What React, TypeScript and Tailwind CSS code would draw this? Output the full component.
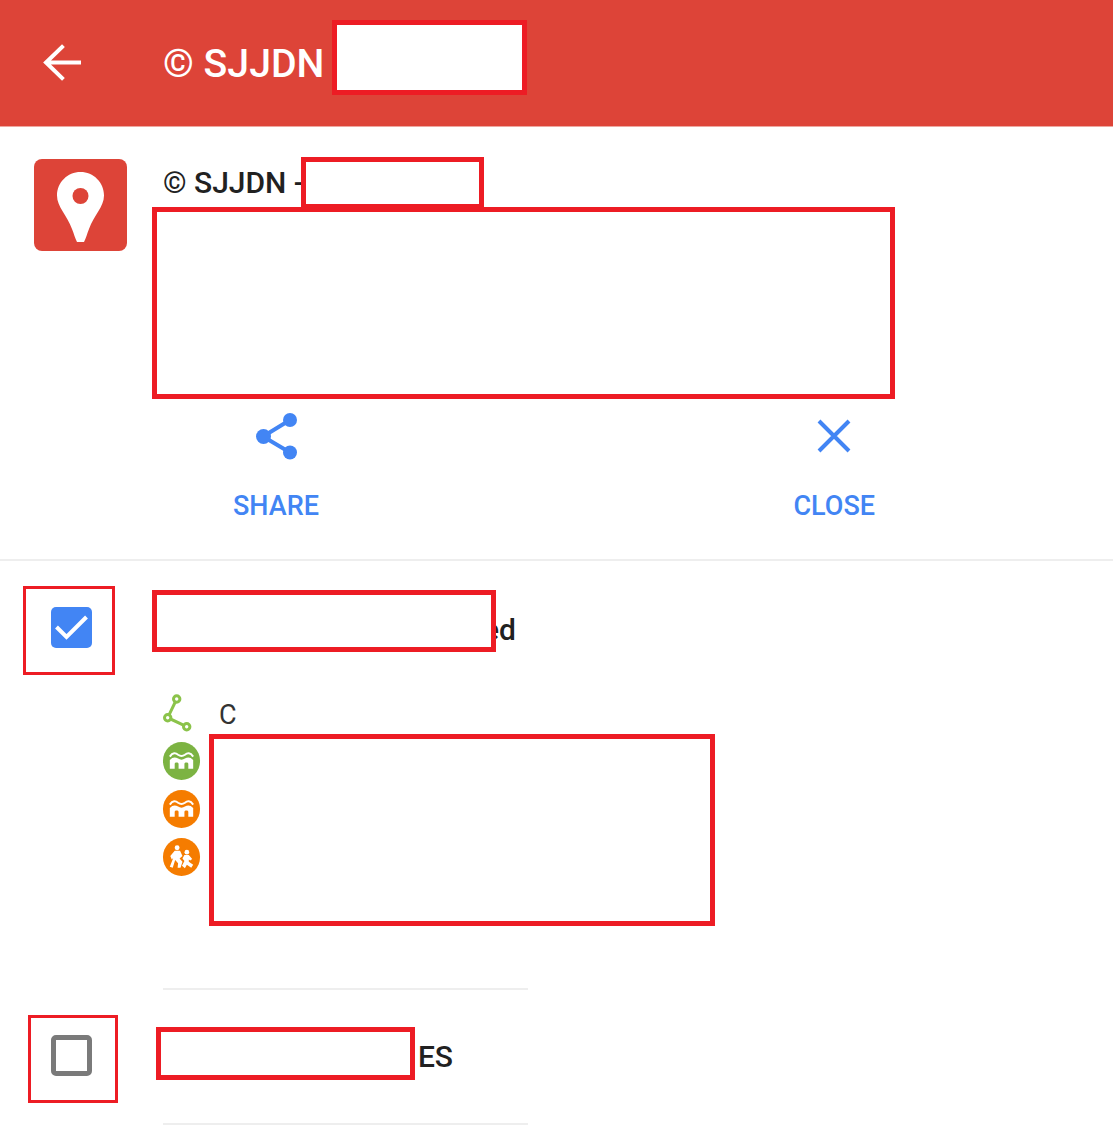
import React from "react";

function Redact({ x, y, w, h, thin }: { x: number; y: number; w: number; h: number; thin?: boolean }) {
  return (
    <div
      className={`absolute border-[#ed1c24] ${thin ? "border-[3px]" : "border-[5px] bg-white"}`}
      style={{ left: x, top: y, width: w, height: h }}
    />
  );
}

function Building() {
  return (
    <svg width="37" height="38" viewBox="0 0 38 38">
      <path d="M7 14.500C10 10 13 10.500 15.500 12.500C17.500 14 20.500 14 22.500 12.500C25 10.500 28 10 31 14.500" fill="none" stroke="#fff" strokeWidth="2" />
      <path d="M7 27V18C10 14.500 13 15 15.500 16.500C17.500 18 20.500 18 22.500 16.500C25 15 28 14.500 31 18V27H26V22C26 20 22 20 22 22V27H16V22C16 20 12 20 12 22V27Z" fill="#fff" />
    </svg>
  );
}

function Kids() {
  return (
    <svg width="37" height="38" viewBox="0 0 38 38" fill="#fff">
      <circle cx="14.500" cy="9.500" r="2.500" />
      <circle cx="24.500" cy="14" r="2.400" />
      <path d="M12 12.500L17.500 12.500L20 18L17 20.500L20 24L18 30L15 30L15.500 25.500L12.500 22L10 30L7 29L10.500 20L9 21.500L7.500 18Z" />
      <path d="M22 17L26.500 17L30 21L28 22.500L26.500 21.500L26.500 24L31 27L29 30L24.500 27L22.500 30.500L19.500 28L22 23L20 20.500Z" />
    </svg>
  );
}

export default function App() {
  return (
    <div className="relative w-[1113px] h-[1134px] overflow-hidden bg-white font-['Roboto',sans-serif] text-[#212121]">
      <header className="h-[127px] flex items-center bg-[#dd4438] border-b border-[#eea79f] text-white">
        <svg className="ml-[42px] shrink-0" width="40" height="40" viewBox="0 0 40 40" fill="none" stroke="#fff" strokeWidth="4" strokeLinecap="square">
          <path d="M37 19.500H5M20 4L4 19.500L20 35" />
        </svg>
        <span className="ml-[81px] mt-[2px] text-[39.250px] leading-[46px] font-medium whitespace-nowrap">© SJJDN</span>
      </header>

      <section className="flex pt-[32px] h-[272px]">
        <div className="ml-[34px] w-[93px] h-[92px] rounded-[8px] bg-[#dd4438] shrink-0">
          <svg width="93" height="92" viewBox="0 0 93 92">
            <path fill="#fff" d="M46.500 13C33.500 13 23 23.500 23 36.500C23 48 33 56 38 70C40 75 41 79 43 83L50 83C52 79 53 75 55 70C60 56 70 48 70 36.500C70 23.500 59.500 13 46.500 13Z" />
            <circle cx="46.500" cy="37" r="8" fill="#dd4438" />
          </svg>
        </div>
        <div className="ml-[36px] pt-[6px] text-[30px] leading-[36px] font-medium whitespace-nowrap">© SJJDN -</div>
      </section>

      <section className="flex justify-between ml-[233px] w-[642px] h-[160px] text-[#4285f4] text-[27px] leading-[32px] font-medium">
        <div className="flex flex-col items-center">
          <svg className="mt-[14px] ml-[2px]" width="44" height="48" viewBox="0 0 44 48" fill="#4285f4" stroke="#4285f4">
            <path d="M35 7L8 23.500L35 39.500" fill="none" strokeWidth="4" />
            <circle cx="35" cy="7" r="7" stroke="none" />
            <circle cx="8.500" cy="23.500" r="7.500" stroke="none" />
            <circle cx="35" cy="39.500" r="7" stroke="none" />
          </svg>
          <span className="mt-[29px]">SHARE</span>
        </div>
        <div className="flex flex-col items-center">
          <svg className="mt-[20px]" width="34" height="34" viewBox="0 0 34 34" fill="none" stroke="#4285f4" strokeWidth="4">
            <path d="M2 2L32 32M32 2L2 32" />
          </svg>
          <span className="mt-[37px]">CLOSE</span>
        </div>
      </section>

      <div className="h-[2px] bg-[#eeeeee]" />

      <section className="flex items-center justify-between w-[516px] pl-[51px] mt-[46px] h-[41px]">
        <div className="w-[41px] h-[41px] rounded-[5px] bg-[#4285f4]">
          <svg width="41" height="41" viewBox="0 0 41 41" fill="none" stroke="#fff" strokeWidth="4">
            <path d="M5.500 20L15.500 30L35.500 10" />
          </svg>
        </div>
        <span className="mt-[4px] text-[30px] leading-[36px] font-medium">ed</span>
      </section>

      <div className="ml-[163px] mt-[41px] flex flex-col">
        <div className="flex items-center h-[48px]">
          <svg width="38" height="40" viewBox="0 0 38 40" fill="none" stroke="#8bc34a" strokeWidth="3">
            <path d="M13.700 6L4.700 24.700L23.700 33.700" />
            <circle cx="13.700" cy="6" r="3.200" fill="#fff" />
            <circle cx="4.700" cy="24.700" r="3.200" fill="#fff" />
            <circle cx="23.700" cy="33.700" r="3.200" fill="#fff" />
          </svg>
          <span className="ml-[18px] mt-[4px] text-[27px] leading-[32px] text-[#333333]">C</span>
        </div>
        <div className="flex items-center h-[48px]">
          <div className="w-[37px] h-[38px] rounded-full bg-[#7cb342]"><Building /></div>
        </div>
        <div className="flex items-center h-[48px]">
          <div className="w-[37px] h-[38px] rounded-full bg-[#f57c00]"><Building /></div>
        </div>
        <div className="flex items-center h-[48px]">
          <div className="w-[37px] h-[38px] rounded-full bg-[#f57c00]"><Kids /></div>
        </div>
      </div>

      <div className="ml-[163px] mt-[107px] w-[365px] h-[2px] bg-[#eeeeee]" />

      <section className="flex items-center w-[453px] justify-between pl-[51px] mt-[45px] h-[41px]">
        <div className="w-[41px] h-[41px] rounded-[5px] border-[5px] border-[#7a7a7a]" />
        <span className="mt-[2px] text-[30px] leading-[36px] font-medium">ES</span>
      </section>

      <div className="ml-[163px] mt-[47px] w-[365px] h-[2px] bg-[#eeeeee]" />

      <Redact x={332} y={20} w={195} h={75} />
      <Redact x={152} y={207} w={743} h={192} />
      <Redact x={301} y={157} w={183} h={52} />
      <Redact x={23} y={586} w={92} h={89} thin />
      <Redact x={152} y={590} w={344} h={62} />
      <Redact x={209} y={734} w={506} h={192} />
      <Redact x={28} y={1015} w={90} h={88} thin />
      <Redact x={156} y={1027} w={259} h={53} />
    </div>
  );
}
